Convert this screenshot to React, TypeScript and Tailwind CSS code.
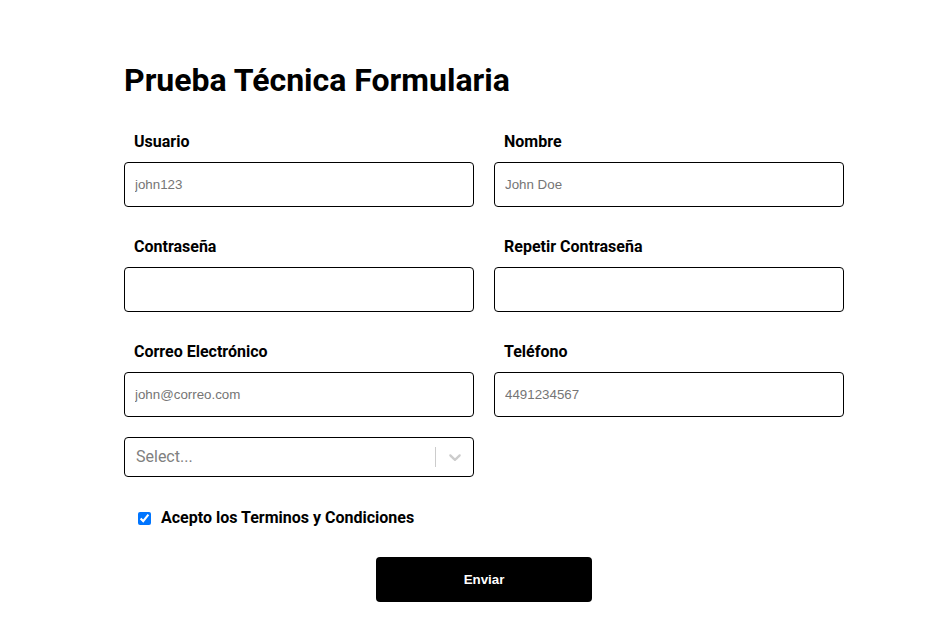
import { useState } from "react";

const fieldClass =
    "h-[45px] w-full rounded-[4px] border border-black bg-white px-[10px] text-[13.333px] text-black outline-none placeholder:text-[#757575] font-['Liberation_Sans',Arial,sans-serif]";

interface FieldProps {
    label: string,
    type?: string,
    placeholder?: string
}

const Field = (props: FieldProps): JSX.Element => {
    return (
        <div className="flex flex-col">
            <label className="mt-px h-5 pl-[10px] text-base leading-5 font-bold text-black">
                {props.label}
            </label>
            <input
                className={`mt-[10px] ${fieldClass}`}
                type={props.type ?? "text"}
                placeholder={props.placeholder}
            />
        </div>
    );
};

export default function App() {
    const [accepted, setAccepted] = useState(true);

    return (
        <div className="min-h-[634px] w-full bg-white pl-[17px] font-['Roboto',sans-serif]">
            <form
                className="mx-auto flex w-[720px] flex-col pt-[62px]"
                onSubmit={(e) => e.preventDefault()}
            >
                <h1 className="text-[32px] leading-9 font-bold text-black">
                    Prueba Técnica Formularia
                </h1>

                <div className="mt-[33px] grid grid-cols-2 gap-x-5 gap-y-[29px]">
                    <Field label="Usuario" placeholder="john123" />
                    <Field label="Nombre" placeholder="John Doe" />
                    <Field label="Contraseña" type="password" />
                    <Field label="Repetir Contraseña" type="password" />
                    <Field label="Correo Electrónico" placeholder="john@correo.com" />
                    <Field label="Teléfono" placeholder="4491234567" />
                </div>

                <div className="mt-5 grid grid-cols-2 gap-x-5">
                    <div className="flex h-10 items-center rounded-[4px] border border-black bg-white pl-[11px]">
                        <span className="flex-1 text-base text-[#808080]">Select...</span>
                        <span className="h-5 w-px bg-[#cccccc]" />
                        <span className="flex w-[37px] items-center justify-center text-[#cccccc]">
                            <svg width="20" height="20" viewBox="0 0 20 20" fill="currentColor">
                                <path d="M4.516 7.548c0.436-0.446 1.043-0.481 1.576 0l3.908 3.747 3.908-3.747c0.533-0.481 1.141-0.446 1.574 0 0.436 0.445 0.408 1.197 0 1.615-0.406 0.418-4.695 4.502-4.695 4.502-0.217 0.223-0.502 0.335-0.787 0.335s-0.57-0.112-0.789-0.335c0 0-4.287-4.084-4.695-4.502s-0.436-1.17 0-1.615z" />
                            </svg>
                        </span>
                    </div>
                </div>

                <label className="mt-[31px] flex h-5 items-center pl-[14px]">
                    <input
                        type="checkbox"
                        className="m-0 h-[13px] w-[13px] accent-[#0075ff]"
                        checked={accepted}
                        onChange={(e) => setAccepted(e.target.checked)}
                    />
                    <span className="ml-[10px] text-base font-bold text-black">
                        Acepto los Terminos y Condiciones
                    </span>
                </label>

                <div className="mt-[29px] flex justify-center">
                    <button
                        type="submit"
                        className="h-[45px] w-[216px] rounded-[4px] bg-black pt-px text-[13.333px] font-bold text-white font-['Liberation_Sans',Arial,sans-serif]"
                    >
                        Enviar
                    </button>
                </div>
            </form>
        </div>
    );
}
